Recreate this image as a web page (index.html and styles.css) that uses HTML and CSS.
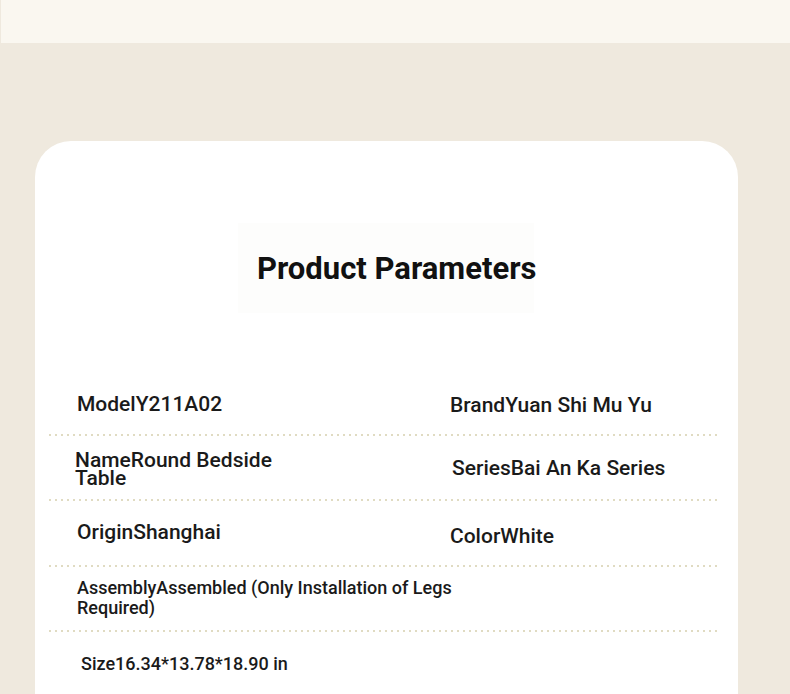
FILE: index.html
```html
<!DOCTYPE html>
<html lang="en">
<head>
<meta charset="utf-8">
<title>Product Parameters</title>
<link rel="stylesheet" href="styles.css">
</head>
<body>
  <div class="topband"></div>
  <main class="card">
    <div class="title-wrap">
      <h1 class="title">Product Parameters</h1>
    </div>
    <div class="params">
      <div class="row">
        <div class="item model">ModelY211A02</div>
        <div class="item brand">BrandYuan Shi Mu Yu</div>
      </div>
      <div class="row">
        <div class="item name">NameRound Bedside Table</div>
        <div class="item series">SeriesBai An Ka Series</div>
      </div>
      <div class="row tall">
        <div class="item origin">OriginShanghai</div>
        <div class="item color">ColorWhite</div>
      </div>
      <div class="row">
        <div class="item assembly">AssemblyAssembled (Only Installation of Legs Required)</div>
      </div>
      <div class="row last">
        <div class="item size">Size16.34*13.78*18.90 in</div>
      </div>
    </div>
  </main>
</body>
</html>
```

FILE: styles.css
```css
* { box-sizing: border-box; }
html, body { margin: 0; padding: 0; }
body {
  background: #efe9de;
  font-family: Roboto, "Liberation Sans", Arial, sans-serif;
  color: #1a1a1a;
  width: 790px;
  height: 694px;
  overflow: hidden;
}
.topband {
  height: 43px;
  margin-left: 1px;
  background: #faf7f0;
}
.card {
  margin: 98px 52px 0 35px;
  background: #ffffff;
  border-radius: 36px 36px 0 0;
  padding-top: 82px;
  height: 560px;
}
.title-wrap {
  width: 296px;
  height: 90px;
  margin-left: 203px;
  padding-left: 19px;
  padding-top: 28px;
  background: #fdfdfc;
}
.title {
  margin: 0;
  font-size: 31px;
  line-height: 36px;
  font-weight: 700;
  color: #111;
  text-align: center;
  white-space: nowrap;
}
.params {
  margin: 58px 20px 0 14px;
}
.row {
  height: 65px;
  display: grid;
  grid-template-columns: 373px 1fr;
  align-items: center;
  padding-left: 28px;
  background-image: linear-gradient(to right, #e0dbc2 2px, transparent 2px);
  background-size: 6px 2px;
  background-repeat: repeat-x;
  background-position: 0 100%;
}
.row.tall { height: 66px; }
.row.last { background: none; }
.item {
  font-size: 21px;
  line-height: 24px;
  font-weight: 500;
  color: #1a1a1a;
}
.model { margin-top: 0; }
.brand { margin-top: 2px; }
.name {
  max-width: 210px;
  line-height: 18px;
  margin-left: -2px;
  margin-top: 1px;
}
.series { margin-left: 2px; margin-top: -2px; }
.origin { margin-top: -4px; }
.color { margin-top: 4px; }
.assembly {
  grid-column: 1 / 3;
  max-width: 390px;
  font-size: 18px;
  line-height: 20px;
  margin-top: -4px;
}
.size {
  grid-column: 1 / 3;
  font-size: 18px;
  margin-left: 4px;
  margin-top: -2px;
}
```
